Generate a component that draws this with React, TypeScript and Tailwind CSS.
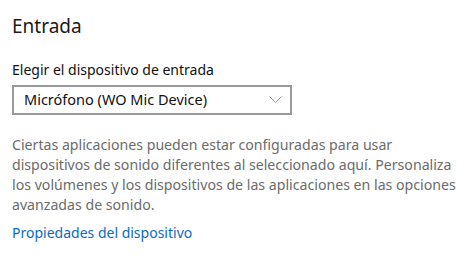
const App = () => {
    return (
        <div
            className="w-[457px] h-[258px] bg-white pl-3 overflow-hidden"
            style={{ fontFamily: '"Noto Sans", "Open Sans", sans-serif' }}
        >
            <h1 className="pt-[12px] text-[19px] leading-[28px] text-[#1a1a1a]">Entrada</h1>

            <div className="mt-[20px] text-[14px] leading-[20px] text-[#111]">
                Elegir el dispositivo de entrada
            </div>

            <div className="mt-[5px] flex items-center justify-between w-[280px] h-[30px] border-2 border-[#999] pl-[10px] pr-[8px]">
                <span className="text-[14.5px] text-[#111]">Micrófono (WO Mic Device)</span>
                <svg width="13" height="8" viewBox="0 0 13 8" fill="none">
                    <path d="M0.5 0.5 L6.5 6.5 L12.5 0.5" stroke="#999" strokeWidth="1" />
                </svg>
            </div>

            <p className="mt-[20px] text-[14.15px] leading-[20px] text-[#6b6b6b]">
                Ciertas aplicaciones pueden estar configuradas para usar
                <br />
                dispositivos de sonido diferentes al seleccionado aquí. Personaliza
                <br />
                los volúmenes y los dispositivos de las aplicaciones en las opciones
                <br />
                avanzadas de sonido.
            </p>

            <a href="#" className="block mt-[8px] text-[14px] leading-[20px] text-[#0a6ac0]">
                Propiedades del dispositivo
            </a>
        </div>
    );
};

export default App;
